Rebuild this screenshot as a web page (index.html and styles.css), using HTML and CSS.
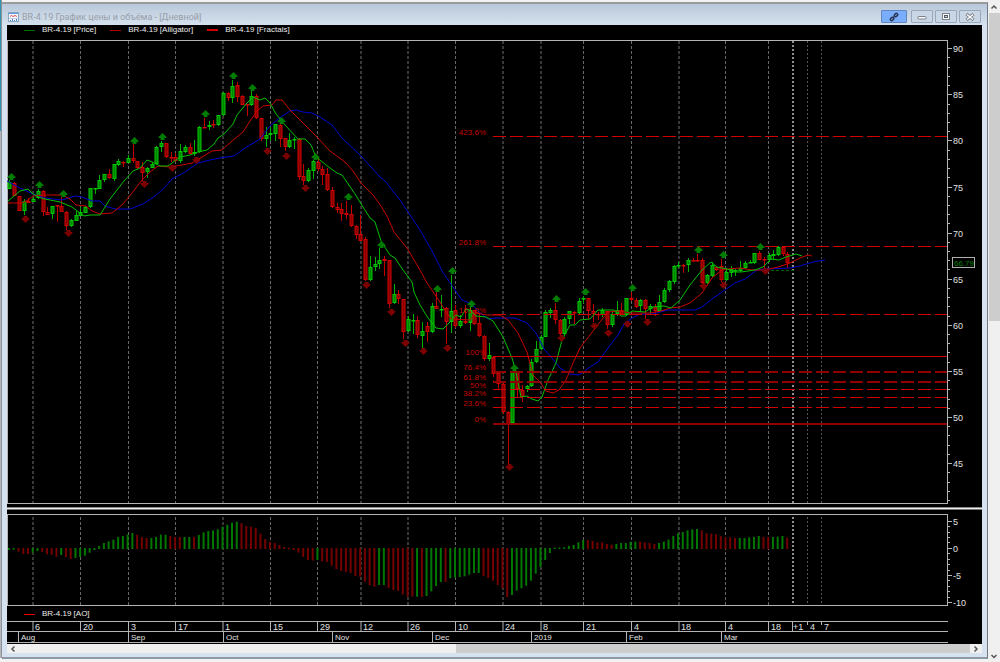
FILE: index.html
```html
<!DOCTYPE html>
<html lang="ru">
<head>
<meta charset="utf-8">
<title>BR-4.19 График цены и объёма</title>
<link rel="stylesheet" href="styles.css">
</head>
<body>
<div class="desktop">
  <div class="edge"><div class="edge-teal"></div></div>
  <main class="window">
    <header class="titlebar">
      <svg class="app-icon" viewBox="0 0 11 10" aria-hidden="true">
        <rect x="0.5" y="0.5" width="10" height="9" fill="#f6faff" stroke="#8aa6c4"/>
        <path d="M1 1.500h9" stroke="#5b9be0"/>
        <path d="M2 4.500l1.500-1 1.500 1 2-1 2 1" fill="none" stroke="#e04a4a"/>
        <path d="M1 6.500h9" stroke="#b8d0ea"/>
        <path d="M2.500 9v-1M4.500 9v-2M6.500 9v-1M8.500 9v-2" stroke="#4d84c4"/>
      </svg>
      <h1 class="title">BR-4.19 График цены и объёма - [Дневной]</h1>
      <div class="controls">
        <button class="ctl ctl-link" aria-label="Связать">
          <svg viewBox="0 0 10 10" class="glyph"><g fill="none" stroke="#26344c" stroke-width="1.500"><rect x="-1.800" y="-1.300" width="3.600" height="2.600" rx="1.300" transform="translate(3 7) rotate(-45)"/><rect x="-1.800" y="-1.300" width="3.600" height="2.600" rx="1.300" transform="translate(7 3) rotate(-45)"/><path d="M4 6l2-2"/></g></svg>
        </button>
        <button class="ctl" aria-label="Свернуть">
          <svg viewBox="0 0 10 10" class="glyph"><rect x="1" y="4.500" width="8" height="2.500" rx="0.500" fill="#fff" stroke="#7c828b"/></svg>
        </button>
        <button class="ctl" aria-label="Развернуть">
          <svg viewBox="0 0 10 10" class="glyph"><rect x="1.500" y="1.500" width="7" height="6" fill="#fff" stroke="#7c828b"/><rect x="3.500" y="3.500" width="3" height="2" fill="#c8d6e6" stroke="#555b64"/></svg>
        </button>
        <button class="ctl" aria-label="Закрыть">
          <svg viewBox="0 0 10 10" class="glyph"><path d="M1.500 2l7 6M8.500 2l-7 6" stroke="#7c828b" stroke-width="3"/><path d="M2 2.500l6 5M8 2.500l-6 5" stroke="#fff" stroke-width="1.300"/></svg>
        </button>
      </div>
    </header>
    <section class="charts">
      <div class="legend">
        <span class="key key-price">BR-4.19 [Price]</span>
        <span class="key key-alligator">BR-4.19 [Alligator]</span>
        <span class="key key-fractals">BR-4.19 [Fractals]</span>
      </div>
      <svg id="price" class="plot" viewBox="7 40 975 467" role="img" aria-label="Price"></svg>
      <div class="splitter"></div>
      <svg id="ao" class="plot" viewBox="7 510 975 98" role="img" aria-label="AO"></svg>
      <div class="legend legend-ao">
        <span class="key key-ao">BR-4.19 [AO]</span>
      </div>
      <svg id="dates" class="plot" viewBox="7 620 975 24" role="img" aria-label="Dates"></svg>
    </section>
    <div class="hscroll">
      <button class="arrow" aria-label="Влево"><svg viewBox="0 0 10 10" class="glyph"><path d="M6.500 2.500L4 5l2.500 2.500" fill="none" stroke="#555" stroke-width="1.500"/></svg></button>
      <div class="htrack"><div class="hthumb"></div></div>
      <button class="arrow" aria-label="Вправо"><svg viewBox="0 0 10 10" class="glyph"><path d="M3.500 2.500L6 5 3.500 7.500" fill="none" stroke="#555" stroke-width="1.500"/></svg></button>
    </div>
  </main>
  <div class="vscroll">
    <button class="arrow arrow-v" aria-label="Вверх"><svg viewBox="0 0 10 10" class="glyph"><path d="M2.500 6.500L5 4l2.500 2.500" fill="none" stroke="#555" stroke-width="1.500"/></svg></button>
    <div class="vtrack"><div class="vthumb"></div></div>
    <button class="arrow arrow-v" aria-label="Вниз"><svg viewBox="0 0 10 10" class="glyph"><path d="M2.500 4L5 6.500 7.500 4" fill="none" stroke="#555" stroke-width="1.500"/></svg></button>
  </div>
</div>
<script src="chart.js"></script>
</body>
</html>
```
FILE: styles.css
```css
* { box-sizing: border-box; }
body {
  margin: 0;
  background: #f2f2f2;
  font-family: "Liberation Sans", Arial, sans-serif;
  font-size: 8px;
}
button { border: 0; padding: 0; background: none; }
.desktop {
  display: flex;
  min-height: 100vh;
}
.edge {
  width: 2px;
  margin-bottom: 4px;
  background: #b4b4bc;
  border-right: 1px solid #8f9499;
}
.edge-teal { height: 131px; background: #2f93b4; }
.window {
  flex: 1;
  min-width: 0;
  align-self: flex-start;
  display: flex;
  flex-direction: column;
  margin-top: 2px;
  padding: 0 5px 4px;
  border-top: 2px solid #999b9d;
  border-right: 1px solid #6f7a86;
  border-bottom: 2px solid #8c98a5;
  background: linear-gradient(#b9c8d9, #d6e2ef 22px);
}
.titlebar {
  display: flex;
  align-items: center;
  height: 21px;
  padding: 4px 1px 0;
  gap: 3px;
}
.app-icon { width: 11px; height: 10px; }
.title {
  flex: 1;
  margin: 0;
  font: 9px Roboto, "Noto Sans", sans-serif;
  color: #989ea7;
}
.controls { display: flex; gap: 2px; }
.ctl {
  display: flex;
  align-items: center;
  justify-content: center;
  width: 22px;
  height: 13px;
  border: 1px solid #99a7b9;
  border-radius: 1px;
  background: #c8d6e6;
}
.ctl-link {
  width: 26px;
  margin-right: 2px;
  border-color: #5f86bf;
  background: #7aaefc;
}
.glyph { display: block; width: 10px; height: 10px; }
.charts { background: #000; }
.legend {
  display: flex;
  gap: 14px;
  height: 15px;
  padding: 0 17px;
  color: #ececec;
  line-height: 10px;
}
.key { display: flex; align-items: center; gap: 7px; height: 10px; white-space: nowrap; }
.key::before { content: ""; width: 11px; height: 1px; background: #007000; }
.key-alligator::before { background: #b00000; }
.key-fractals::before { height: 2px; background: #d00000; }
.key-ao::before { background: #f00000; }
.legend-ao { height: 12px; padding-top: 1px; }
.plot { display: block; width: 100%; height: auto; }
.splitter {
  height: 3px;
  background: #eee;
  border-top: 1px solid #888;
  border-bottom: 1px solid #777;
}
.hscroll {
  display: flex;
  height: 9px;
  background: #f0f0f0;
}
.arrow {
  display: flex;
  align-items: center;
  justify-content: center;
  width: 12px;
  height: 9px;
}
.htrack { flex: 1; display: flex; justify-content: flex-end; }
.hthumb { width: 54%; background: #cdcdcd; }
.vscroll {
  display: flex;
  flex-direction: column;
  width: 12px;
  background: #f0f0f0;
}
.arrow-v { width: 12px; height: 13px; }
.vtrack { flex: 1; padding-left: 1px; }
.vthumb { height: 48.4%; background: #cdcdcd; }

.frame { fill: none; stroke: #b4b4b4; stroke-width: 1; }
.grid { stroke: #666; stroke-dasharray: 3 2; }
.grid-soft { stroke: #383838; stroke-width: 2; stroke-dasharray: 3 2; }
.grid-now { stroke: #909090; stroke-width: 2; stroke-dasharray: 2 2; }
.grid-next { stroke: #555; stroke-dasharray: 2 2; }
.label { fill: #e0e0e0; font-size: 8px; }
.number { font-size: 9px; }
.fib { stroke: #d00000; }
.fib-wide { stroke: #900000; stroke-width: 2; }
.fib-dash { stroke-dasharray: 13 4; }
.fib-label { fill: #c80000; font-size: 8px; text-anchor: end; }
.up { fill: #008400; stroke: #00c800; }
.down { fill: #880000; stroke: #d00000; }
.wick-up { stroke: #00b000; }
.wick-down { stroke: #c00000; }
.jaw, .teeth, .lips { fill: none; stroke-width: 1; }
.jaw { stroke: #0000d0; }
.teeth { stroke: #c80000; }
.lips { stroke: #00c000; }
.fractal-up { fill: #007c00; }
.fractal-down { fill: #7c0000; }
.ao-up { stroke: #007800; stroke-width: 2; }
.ao-down { stroke: #740000; stroke-width: 2; }
.price-box { fill: #000; stroke: #b0b0b0; }
.price-value { fill: #008000; font-size: 8px; }
.last-price { stroke: #006000; stroke-dasharray: 3 2; }
```
FILE: chart.js
```js
const NS = "http://www.w3.org/2000/svg";
function add(parent, tag, cls, attrs, text) {
  const el = document.createElementNS(NS, tag);
  if (cls) el.setAttribute("class", cls);
  for (const k in attrs) el.setAttribute(k, attrs[k]);
  if (text !== undefined) el.textContent = text;
  parent.appendChild(el);
  return el;
}
const line = (p, cls, x1, y1, x2, y2) => add(p, "line", cls, { x1, y1, x2, y2 });
const label = (p, cls, x, y, t) => add(p, "text", cls, { x, y }, t);
const barX = i => Math.round(9.3 + i * 4.745) + 0.5;

const price = document.getElementById("price");
const ao = document.getElementById("ao");
const dates = document.getElementById("dates");

/* x position, day label, soft line flag */
const days = [[33,"6",1],[80.5,"20"],[128.5,"3"],[175.5,"17"],[223,"1",1],[270.5,"15"],[317.5,"29"],[361,"12",1],[408,"26",1],[455.5,"10"],[503,"24",1],[541,"8",1],[583.5,"21"],[631.5,"4"],[679,"18",1],[725.5,"4"],[768.5,"18"]];
const months = [[18.5,"Aug"],[128.5,"Sep"],[223.5,"Oct"],[332.5,"Nov"],[432.5,"Dec"],[531.5,"2019"],[626.5,"Feb"],[721.5,"Mar"]];

for (const [svg, top, bottom] of [[price, 41, 503], [ao, 517, 605]]) {
  for (const [x, , soft] of days) line(svg, soft ? "grid-soft" : "grid", x, top, x, bottom);
  line(svg, "grid-now", 793, top, 793, bottom);
  line(svg, "grid-next", 807.5, top, 807.5, bottom);
  line(svg, "grid-next", 821.5, top, 821.5, bottom);
}
add(price, "rect", "frame", { x: 7.5, y: 40.5, width: 940, height: 463 });
add(ao, "rect", "frame", { x: 7.5, y: 514.5, width: 940, height: 91 });

for (let v = 90; v >= 41; v--) {
  const y = Math.round(48.2 + (90 - v) * 9.22) + 0.5;
  line(price, "frame", 948, y, v % 5 ? 950 : 952, y);
  if (v % 5 === 0) label(price, "label number", 953, y + 3, v);
}
for (let v = 5; v >= -10; v--) {
  const y = Math.round(547.8 - v * 5.43) + 0.5;
  line(ao, "frame", 948, y, v % 5 ? 950 : 952, y);
  if (v % 5 === 0) label(ao, "label number", 953, y + 3, v);
}

/* colour, body top, body bottom, high, low */
const candles = `G182,189,180,189 R183,196,182,196 R196,211,196,211 G201,211,199,215 R201,203,198,203 G199,202,197,202 G191,198,189,199 R191,212,190,216 R212,215,207,215 G206,214,206,219
R205,206,205,222 R206,212,197,212 R212,226,211,230 G220,226,219,227 G215,221,211,221 G212,216,207,216 G207,213,206,213 G188,207,188,208 G188,189,188,194 G180,189,175,189
G174,180,174,182 R174,178,169,179 G164,179,164,181 G161,165,159,166 R162,163,161,167 G158,163,155,163 R158,161,144,163 R161,168,161,169 R167,173,162,181 G168,172,167,178
G164,168,162,168 G147,164,146,164 G143,147,141,152 R143,157,143,158 R157,158,152,162 R157,161,153,162 G151,161,144,163 G147,152,145,153 R147,154,143,154 G152,154,140,156
G127,152,126,153 R127,128,118,128 G125,127,121,130 R124,125,120,128 G115,125,115,126 G93,115,92,116 R93,98,92,101 G86,98,80,103 R85,97,82,102 R96,105,95,105
R104,105,104,116 G96,105,91,106 R96,118,94,119 R118,139,118,141 G135,139,127,147 G133,135,127,141 G124,134,124,141 R125,139,124,147 R138,147,138,151 G140,147,133,148
G139,140,137,149 R139,177,138,180 R176,181,164,185 G170,181,168,182 G161,171,160,179 R162,169,158,171 R169,175,166,185 R174,190,168,191 R190,207,187,208 R207,210,203,213
R209,214,203,221 R213,215,201,219 R214,226,205,227 R226,235,225,239 R234,241,215,241 R239,280,237,281 G267,280,256,281 G264,267,257,271 G260,264,248,269 R259,261,256,276
R260,304,260,308 G294,303,284,304 R294,299,290,304 R299,332,299,339 G319,331,316,332 G320,321,314,334 R320,335,316,338 G331,336,322,348 R326,332,322,342 G306,332,303,333
R306,309,292,309 G309,310,295,317 R308,322,307,344 G311,322,275,333 R310,326,305,328 G321,326,315,328 R321,323,305,324 G310,323,306,331 R310,324,310,325 R323,336,313,337
R336,359,335,361 G355,359,343,361 R357,374,356,377 R373,384,371,390 R384,412,382,414 R412,424,411,464 G372,423,372,424 R372,389,371,397 R390,397,385,402 G386,389,385,392
G362,386,359,387 G349,362,341,363 G337,349,335,350 G312,337,310,337 G310,313,308,318 R310,320,303,324 R320,334,319,335 G319,334,317,335 G311,319,311,324 R312,313,311,324
G301,313,298,314 G298,299,296,303 R298,311,298,319 R311,314,304,322 R314,315,312,320 G310,315,308,317 R311,325,311,329 G314,325,312,327 G310,314,301,316 R310,314,303,315
G298,315,298,316 R298,300,292,301 R300,307,298,308 G300,306,299,312 R300,309,299,319 G306,309,304,314 R307,311,304,316 G302,311,295,312 G290,302,288,303 G281,290,280,292
G266,282,265,284 G265,266,262,268 R265,266,264,273 G260,265,258,272 R260,261,258,262 R260,261,254,262 R260,283,258,284 G275,283,274,284 G265,276,262,277 R267,270,266,271
R266,280,259,282 G272,280,268,281 G269,273,266,277 G270,271,269,276 G268,271,261,272 G263,268,261,269 G262,263,260,263 G253,263,253,264 R253,260,251,260 R259,260,257,268
G255,260,253,262 G254,256,250,260 G247,255,246,256 R247,254,246,256 R254,263,252,268`.split(/\s+/);
candles.forEach((c, i) => {
  const up = c[0] === "G";
  const [top, bottom, high, low] = c.slice(1).split(",").map(Number);
  const x = barX(i);
  line(price, up ? "wick-up" : "wick-down", x, high, x, low);
  add(price, "rect", up ? "up" : "down", { x: x - 1.5, y: top + 0.5, width: 3, height: Math.max(bottom - top - 1, 0.5) });
});

const lines = {
  jaw: "7,181 18,187 33,194 45,198 62,200 75,196 82,197 92,201 100,201 105,206 115,209 130,209 143,204 155,196 163,189 172,179 185,172 198,163 210,160 220,158 234,156 245,148 260,139 270,126 278,119 290,111 296,110 303,112 312,113 320,117 332,125 342,138 361,156 380,177 385,181 400,200 420,230 432,251 442,271 455,290 462,300 472,304 478,311 488,319 495,318 515,318 527,323 536,333 544,349 552,358 560,368 570,374 579,375 590,367 598,362 608,348 618,335 624,324 632,318 640,314 653,314 668,310 695,310 702,307 712,299 722,292 735,283 745,279 757,270 765,269 790,268 800,266 813,262 825,260",
  teeth: "8,203 22,203 28,200 33,196 45,195 62,195 70,199 76,205 86,206 92,211 100,214 112,213 122,205 132,193 142,180 150,172 158,166 170,167 182,165 192,163 202,157 212,151 222,150 232,141 243,132 250,121 257,111 263,106 272,105 276,100 282,100 290,110 300,120 316,136 330,151 345,162 353,171 361,183 373,195 381,206 387,216 394,232 407,248 420,270 427,283 440,302 446,312 451,319 470,320 475,313 488,315 500,315 508,320 518,333 527,352 533,375 540,382 546,391 553,393 559,390 566,380 573,363 580,348 590,335 600,322 608,312 620,311 630,313 650,313 661,311 670,308 680,307 690,303 702,293 712,278 722,270 727,269 740,268 752,270 765,270 778,267 790,263 800,258 808,255 812,256",
  lips: "8,201 20,191 28,189 33,194 38,197 45,199 60,202 72,207 80,213 84,216 90,215 100,215 110,199 124,181 133,171 140,168 147,160 152,162 160,166 168,166 172,163 180,157 190,155 198,152 207,150 214,144 218,138 224,134 233,124 237,115 246,104 253,97 260,100 265,98 270,103 276,114 285,125 298,139 305,139 311,145 316,157 330,168 337,173 342,175 355,194 363,207 370,218 375,222 381,241 390,255 395,258 403,270 412,282 414,292 420,305 428,318 436,328 443,329 450,322 456,315 461,317 466,309 470,310 476,316 486,317 493,321 503,337 512,358 516,372 521,397 527,396 532,399 538,401 542,397 548,380 556,363 562,340 570,325 575,325 580,320 590,319 598,310 614,310 621,316 626,316 632,311 645,312 653,307 664,306 671,308 680,300 690,285 702,270 711,262 717,267 727,269 735,272 741,272 755,270 763,267 771,259 779,260 786,257 796,254 802,256"
};
for (const name in lines) add(price, "polyline", name, { points: lines[name] });

/* y position, level, line style */
const levels = [[136.5,"423.6%","fib fib-dash"],[246.5,"261.8%","fib fib-dash"],[314.5,"161.8%","fib fib-dash"],[356.5,"100%","fib"],[372,"76.4%","fib-wide fib-dash"],[382,"61.8%","fib-wide fib-dash"],[389.5,"50%","fib fib-dash"],[397.5,"38.2%","fib fib-dash"],[407.5,"23.6%","fib fib-dash"],[424,"0%","fib-wide"]];
for (const [y, text, cls] of levels) {
  line(price, cls, 493, y, 947, y);
  label(price, "fib-label", 486, y - 2, text);
}
line(price, "last-price", 771, 270.5, 795, 270.5);

const tops = [[11,177],[39,185],[63,194],[134,141],[162,137],[205,114],[233,76],[252,88],[281,121],[315,157],[348,197],[381,245],[437,289],[452,271],[471,304],[514,368],[556,299],[585,292],[632,288],[698,250],[723,255],[760,247]];
const bottoms = [[25,219],[68,233],[144,184],[172,168],[196,160],[267,151],[286,156],[305,188],[366,285],[391,312],[405,343],[423,351],[447,348],[509,467],[561,338],[594,326],[608,333],[627,324],[647,322],[703,286],[723,285],[765,271]];
for (const [x, y] of tops) add(price, "path", "fractal-up", { d: `M${x + 0.5} ${y - 4}l4 4v1h-2v2h-4v-2h-2v-1z` });
for (const [x, y] of bottoms) add(price, "path", "fractal-down", { d: `M${x + 0.5} ${y + 4}l-4-4v-1h2v-2h4v2h2v1z` });

add(price, "rect", "price-box", { x: 952.5, y: 257.5, width: 22, height: 10 });
label(price, "price-value", 954, 265.5, "66.79");

/* offset of each bar's end below the pane's origin, in thirds of a unit */
const bars = "G150 G149 R155 R162 R162 G158 G153 R156 R163 R164 R170 G165 R171 R177 G174 G171 G167 G158 G150 G138 G129 G124 G119 G111 G108 G104 G99 R104 R111 R114 G114 G111 G104 G104 R108 R111 R111 G111 G111 R111 G105 G97 G93 G91 G88 G80 G74 G68 G65 R69 R78 R80 R84 R101 R117 R126 R129 R135 R141 R143 R150 R158 R171 R180 R182 G180 R184 R186 R197 R207 R213 R216 R219 R228 R230 R245 R255 R260 G255 G255 R264 R270 R273 R283 R290 R290 G290 R291 G288 G274 G258 G246 R246 G235 G232 G231 G229 G224 G219 G219 R228 R234 R242 R255 R265 R291 G285 G272 G265 G257 G242 G221 G201 G180 G159 G143 G143 G142 G138 G135 G127 G120 R120 R123 R127 R127 R132 R134 G132 G129 G129 G125 G125 R125 R127 R129 R132 G129 G125 G119 G108 G100 G96 G91 G88 G87 R91 R99 R101 R103 R108 R111 R112 R114 G114 G114 G112 G111 G108 R111 R111 G111 G110 G108 R113".split(" ");
bars.forEach((b, i) => {
  const end = 500 + Number(b.slice(1)) / 3;
  const x = 9 + i * 4.745;
  line(ao, b[0] === "G" ? "ao-up" : "ao-down", x, end > 548.5 ? 548 : 549, x, end);
});

for (const y of [621.5, 631.5, 642.5]) line(dates, "frame", 7, y, 948, y);
for (const [x, text] of days) {
  line(dates, "frame", x, 621, x, 631);
  label(dates, "label number", Math.round(x) + 2, 630, text);
}
for (const [x, text] of months) {
  line(dates, "frame", x, 632, x, 642);
  label(dates, "label", x + 2.5, 640, text);
}
line(dates, "frame", 792.5, 621, 792.5, 631);
line(dates, "frame", 807.5, 622, 807.5, 625);
line(dates, "frame", 821.5, 622, 821.5, 625);
label(dates, "label number", 793, 630, "+1");
label(dates, "label number", 810, 630, "4");
label(dates, "label number", 824, 630, "7");
```
